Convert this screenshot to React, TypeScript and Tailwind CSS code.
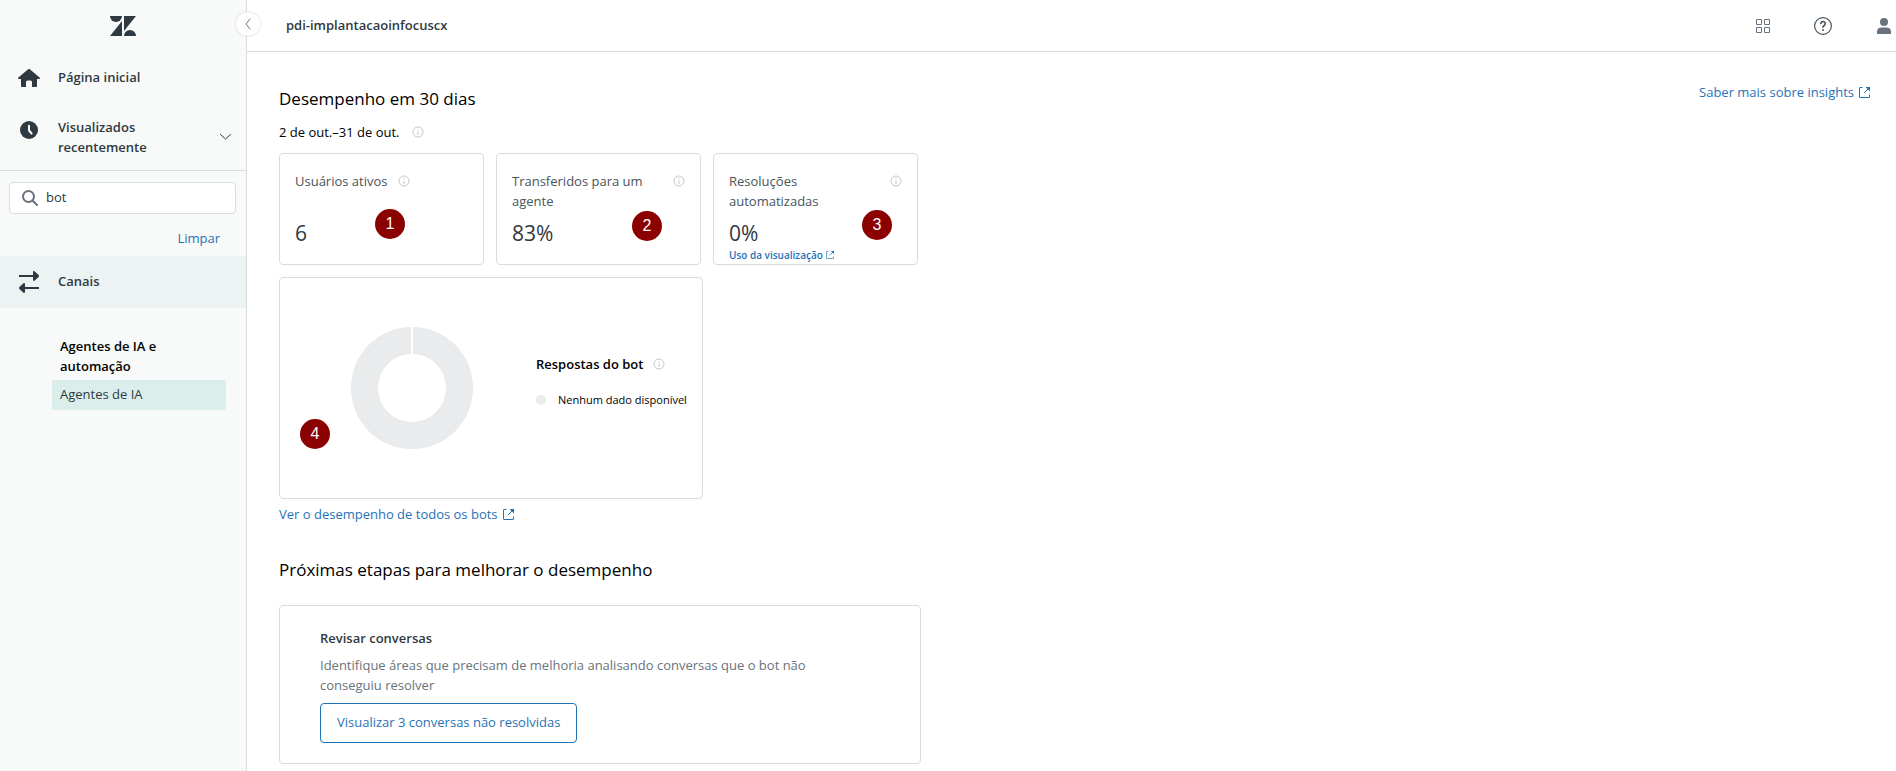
import { useState } from "react";

function ZendeskLogo() {
  return (
    <svg width="26" height="20" viewBox="0 0 26 20" fill="#2f3941">
      <path d="M0 0h12a6 6 0 0 1-12 0z" />
      <path d="M12 5v15H0z" />
      <path d="M14 0h12L14 15z" />
      <path d="M14 20a6 6 0 0 1 12 0z" />
    </svg>
  );
}

function HomeIcon() {
  return (
    <svg width="22" height="18" viewBox="0 0 22 18" fill="#2f3941">
      <path d="M10.2.3a1.2 1.2 0 0 1 1.6 0l9.8 8.2c.7.6.4 1.5-.5 1.5H19v7.2c0 .5-.3.8-.8.8H14v-5a1.500 1.500 0 0 0-1.500-1.500h-3A1.500 1.500 0 0 0 8 13v5H3.800c-.5 0-.8-.3-.8-.8V10H.9C0 10-.3 9.100.4 8.500z" />
    </svg>
  );
}

function ClockIcon() {
  return (
    <svg width="18" height="18" viewBox="0 0 18 18" fill="none">
      <circle cx="9" cy="9" r="9" fill="#2f3941" />
      <path d="M9 4.800V9.500l2.600 3" stroke="#f8f9f9" strokeWidth="2" strokeLinecap="round" strokeLinejoin="round" />
    </svg>
  );
}

function ChannelsIcon() {
  return (
    <svg width="20" height="22" viewBox="0 0 20 22" fill="#2f3941">
      <path d="M0 4h14V1.200c0-1 .8-1.500 1.500-.9l4.100 3.800c.5.500.5 1.300 0 1.800l-4.100 3.800c-.7.600-1.500.1-1.500-.9V6H0z" />
      <path d="M20 16H6v-2.800c0-1-.8-1.500-1.500-.9L.4 16.100c-.5.500-.5 1.300 0 1.800l4.100 3.800c.7.600 1.500.1 1.500-.9V18h14z" />
    </svg>
  );
}

function SearchIcon() {
  return (
    <svg className="shrink-0" width="16" height="16" viewBox="0 0 16 16" fill="none" stroke="#68737d" strokeWidth="2" strokeLinecap="round">
      <circle cx="6.5" cy="6.5" r="5.5" />
      <path d="M10.5 10.5L15 15" />
    </svg>
  );
}

function InfoIcon() {
  return (
    <svg className="shrink-0" width="12" height="12" viewBox="0 0 12 12" fill="none" stroke="#c2c8cc">
      <circle cx="6" cy="6" r="5" />
      <path d="M6 5.5V9" />
      <path d="M6 3v1.2" />
    </svg>
  );
}

function ExternalIcon({ size = 11 }: { size?: number }) {
  return (
    <svg className="shrink-0" width={size} height={size} viewBox="0 0 11 11" fill="none" stroke="#1f73b7">
      <path d="M3.5.5H1a.5.5 0 0 0-.5.5v9a.5.5 0 0 0 .5.500h9a.5.5 0 0 0 .5-.5V7.500" />
      <path d="M5 6l4-4" />
      <path d="M6.500 0H11v4.500z" fill="#1f73b7" stroke="none" />
    </svg>
  );
}

function Badge({ n, place }: { n: number; place: string }) {
  return (
    <span
      className={`absolute flex size-[30px] items-center justify-center rounded-full bg-[#8b0000] font-['Liberation_Sans',sans-serif] text-base text-white ${place}`}
    >
      {n}
    </span>
  );
}

const cards = [
  { n: 1, title: "Usuários ativos", value: "6", place: "left-[95px] top-[55px]", inline: true },
  { n: 2, title: "Transferidos para um agente", value: "83%", place: "left-[135px] top-[57px]" },
  {
    n: 3,
    title: "Resoluções automatizadas",
    value: "0%",
    place: "left-[148px] top-[56px]",
    link: "Uso da visualização",
  },
];

function SideBar() {
  const [search, setSearch] = useState("bot");

  return (
    <aside className="relative w-[247px] shrink-0 border-r border-[#d8dcde] bg-[#f8f9f9]">
      <div className="flex h-[52px] items-center justify-center">
        <ZendeskLogo />
      </div>
      <button
        type="button"
        aria-label="Recolher menu"
        className="absolute -right-[14px] top-3 flex size-6 items-center justify-center rounded-full bg-white shadow-[0_0_2px_rgba(47,57,65,0.25)]"
      >
        <svg width="6" height="12" viewBox="0 0 6 12" fill="none" stroke="#68737d" strokeLinecap="round">
          <path d="M5 1L1 6l4 5" />
        </svg>
      </button>

      <nav>
        <a href="#" className="flex h-[52px] items-center pl-[18px] font-semibold">
          <span className="w-10">
            <HomeIcon />
          </span>
          Página inicial
        </a>
        <button
          type="button"
          className="flex w-full items-start border-b border-[#d8dcde] pb-[13px] pl-5 pr-[15px] pt-[13px] text-left font-semibold leading-5"
        >
          <span className="w-[38px] pt-1">
            <ClockIcon />
          </span>
          <span className="grow">
            Visualizados
            <br />
            recentemente
          </span>
          <svg className="self-center" width="11" height="6" viewBox="0 0 11 6" fill="none" stroke="#2f3941" strokeLinecap="round">
            <path d="M.5.5L5.5 5l5-4.5" />
          </svg>
        </button>

        {/* Search */}
        <div className="px-[9px] pr-[10px] pt-[11px]">
          <label className="flex h-8 items-center gap-2 rounded border border-[#d8dcde] bg-white px-3">
            <SearchIcon />
            <input
              aria-label="Pesquisar"
              className="w-full bg-transparent outline-none"
              value={search}
              onChange={(e) => setSearch(e.target.value)}
            />
          </label>
        </div>
        <div className="flex h-[42px] items-center justify-end pr-[26px] pt-2">
          <button type="button" className="text-[#1f73b7]" onClick={() => setSearch("")}>
            Limpar
          </button>
        </div>

        <a href="#" className="flex h-[52px] items-center bg-[#edf2f3] pl-[19px] font-semibold">
          <span className="w-[39px]">
            <ChannelsIcon />
          </span>
          Canais
        </a>
        <div className="pl-[52px] pr-5 pt-7">
          <h2 className="w-32 pl-2 font-semibold leading-5 text-black">Agentes de IA e automação</h2>
          <a href="#" className="mt-1 flex h-[30px] items-center rounded-[3px] bg-[#daeeeb] pl-2">
            Agentes de IA
          </a>
        </div>
      </nav>
    </aside>
  );
}

function Header() {
  return (
    <header className="flex h-[52px] items-center justify-between border-b border-[#d8dcde] pl-[39px] pr-[5px]">
      <span className="font-semibold">pdi-implantacaoinfocuscx</span>
      <div className="flex items-center">
        <button type="button" aria-label="Produtos" className="mr-11">
          <svg width="14" height="14" viewBox="0 0 14 14" fill="none" stroke="#68737d">
            <path d="M.5.5h5v5h-5zM8.5.5h5v5h-5zM.5 8.5h5v5h-5zM8.5 8.5h5v5h-5z" />
          </svg>
        </button>
        <button type="button" aria-label="Ajuda" className="mr-[45px]">
          <svg width="18" height="18" viewBox="0 0 18 18" fill="none" stroke="#49545c">
            <circle cx="9" cy="9" r="8.4" strokeWidth="1.2" />
            <path d="M6.8 6.6a2.2 2.2 0 1 1 3.400 1.900c-.8.500-1.200.9-1.200 1.700" strokeWidth="1.600" strokeLinecap="round" />
            <circle cx="9" cy="13" r="1" fill="#49545c" stroke="none" />
          </svg>
        </button>
        <button type="button" aria-label="Perfil">
          <svg width="14" height="16" viewBox="0 0 14 16" fill="#68737d">
            <circle cx="7" cy="4" r="4" />
            <path d="M0 16v-2.500C0 11 2 9.500 4.500 9.500h5C12 9.500 14 11 14 13.500V16z" />
          </svg>
        </button>
      </div>
    </header>
  );
}

export default function App() {
  return (
    <div className="flex min-h-screen bg-white font-['Open_Sans','Noto_Sans',sans-serif] text-[13px] text-[#2f3941]">
      <SideBar />

      <div className="min-w-0 flex-1">
        <Header />

        <main className="pb-[7px] pl-8 pr-[26px] pt-[30px]">
          <div className="flex items-start justify-between">
            <h1 className="pt-[3px] text-[17px] leading-7 text-black">Desempenho em 30 dias</h1>
            <a href="#" className="flex items-center gap-[5px] leading-5 text-[#1f73b7]">
              Saber mais sobre insights
              <ExternalIcon />
            </a>
          </div>
          <p className="mt-[9px] flex items-center gap-3 leading-5 text-black">
            2 de out.–31 de out.
            <InfoIcon />
          </p>

          {/* Metrics */}
          <div className="mt-[11px] flex gap-3">
            {cards.map((card) => (
              <section
                key={card.n}
                className="relative flex h-28 w-[205px] flex-col rounded border border-[#d8dcde] px-[15px] pt-[17px]"
              >
                <div className={`flex h-10 gap-[10px] ${card.inline ? "" : "justify-between"}`}>
                  <h2 className={`leading-5 text-[#49545c] ${card.inline ? "" : "w-[136px]"}`}>{card.title}</h2>
                  <span className="pt-1">
                    <InfoIcon />
                  </span>
                </div>
                <p className="mt-2 text-[21px] font-medium leading-7">{card.value}</p>
                {card.link && (
                  <a href="#" className="flex items-center gap-[3px] text-[10px] font-semibold leading-4 text-[#1f73b7]">
                    {card.link}
                    <ExternalIcon size={8} />
                  </a>
                )}
                <Badge n={card.n} place={card.place} />
              </section>
            ))}
          </div>

          {/* Bot answers */}
          <section className="relative mt-3 flex h-[222px] w-[424px] items-center rounded border border-[#d8dcde] pl-[71px]">
            <svg width="122" height="122" viewBox="0 0 122 122" fill="none">
              <circle cx="61" cy="61" r="47.5" stroke="#e9ebed" strokeWidth="27" />
              <path d="M61 0v36" stroke="#fff" strokeWidth="2" />
            </svg>
            <div className="ml-[63px] pb-3">
              <h2 className="flex items-center gap-[10px] font-semibold leading-5 text-black">
                Respostas do bot
                <InfoIcon />
              </h2>
              <p className="mt-4 flex items-center gap-3 whitespace-nowrap text-[11px] leading-5 text-black">
                <span className="size-[10px] rounded-full bg-[#e9ebed]" />
                Nenhum dado disponível
              </p>
            </div>
            <Badge n={4} place="left-5 top-[141px]" />
          </section>
          <a href="#" className="mt-[5px] flex w-fit items-center gap-[5px] leading-5 text-[#1f73b7]">
            Ver o desempenho de todos os bots
            <ExternalIcon />
          </a>

          <h2 className="mt-8 text-[17px] leading-7 text-black">Próximas etapas para melhorar o desempenho</h2>
          <section className="mt-[21px] w-[642px] rounded border border-[#d8dcde] px-10 pb-5 pt-[22px]">
            <h3 className="font-semibold leading-5">Revisar conversas</h3>
            <p className="mt-[7px] max-w-[520px] leading-5 text-[#68737d]">
              Identifique áreas que precisam de melhoria analisando conversas que o bot não conseguiu resolver
            </p>
            <button
              type="button"
              className="mt-2 h-10 rounded border border-[#1f73b7] px-4 text-[#1f73b7]"
            >
              Visualizar 3 conversas não resolvidas
            </button>
          </section>
        </main>
      </div>
    </div>
  );
}
